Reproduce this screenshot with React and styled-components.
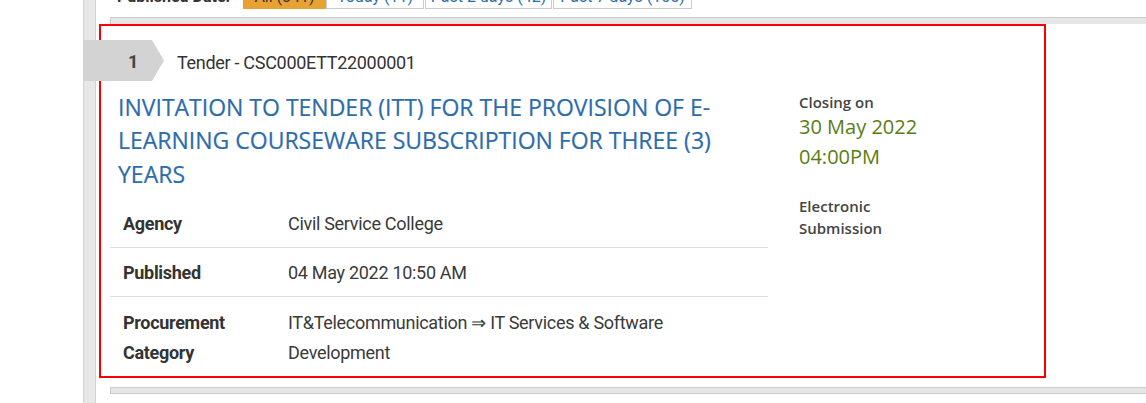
import React from "react";
import styled, { createGlobalStyle } from "styled-components";

const Global = createGlobalStyle`
  html, body { margin: 0; padding: 0; background: #fff; }
  body { font-family: Roboto, "Liberation Sans", sans-serif; color: #333; }
`;

const Page = styled.div`
  display: flex;
  height: 403px;
  overflow: hidden;
`;

const Gutter = styled.div`
  width: 83px;
  flex-shrink: 0;
`;

const Rail = styled.div`
  width: 13px;
  flex-shrink: 0;
  box-sizing: border-box;
  background: #e7e7e7;
  border-left: 1px solid #d3d3d3;
  border-right: 1px solid #d3d3d3;
`;

const Main = styled.div`
  flex: 1;
  display: flex;
  flex-direction: column;
  min-width: 0;
`;

const FilterBar = styled.div`
  display: flex;
  align-items: stretch;
  height: 26px;
  margin-top: -17px;
  margin-left: 21px;
`;

const FilterLabel = styled.span`
  display: flex;
  align-items: center;
  font-weight: 700;
  font-size: 16px;
  color: #333;
  width: 126px;
`;

const Tab = styled.span`
  display: flex;
  align-items: center;
  justify-content: center;
  box-sizing: border-box;
  width: ${(p) => p.$w}px;
  font-size: 16px;
  background: ${(p) => (p.$active ? "#e8a234" : "#fff")};
  color: ${(p) => (p.$active ? "#333" : "#2e6da4")};
  border: 1px solid ${(p) => (p.$active ? "#e8a234" : "#ccc")};
  margin-left: ${(p) => (p.$gap ? 1 : 0)}px;
`;

const Divider = styled.div`
  margin-left: 14px;
  margin-top: ${(p) => p.$top}px;
  height: 7px;
  box-sizing: border-box;
  background: #e6e6e6;
  border: 1px solid #cbcbcb;
  border-right: none;
  ${(p) => (p.$open ? "border-bottom: none;" : "")}
`;

const Card = styled.div`
  position: relative;
  margin-left: 3px;
  width: 947px;
  height: 354px;
  box-sizing: border-box;
  border: 2px solid #ff0000;
  padding-top: 14px;
`;

const Header = styled.div`
  display: flex;
  align-items: center;
  margin-left: -18px;
  height: 41px;
`;

const Ribbon = styled.div`
  width: 81px;
  height: 41px;
  background: #d3d3d3;
  clip-path: polygon(0 0, 69px 0, 81px 50%, 69px 100%, 0 100%);
  display: flex;
  align-items: center;
  padding: 2px 0 0 45px;
  box-sizing: border-box;
  font-weight: 700;
  font-size: 18px;
  color: #444;
`;

const RefNo = styled.span`
  margin-left: 13px;
  padding-top: 3px;
  font-size: 18px;
  letter-spacing: -0.3px;
  color: #333;
`;

const Body = styled.div`
  display: flex;
  padding-left: 9px;
  margin-top: 9.5px;
`;

const LeftCol = styled.div`
  width: 658px;
  flex-shrink: 0;
`;

const Title = styled.h2`
  margin: 0;
  padding: 0 0 0 8px;
  font-family: "Open Sans", "Liberation Sans", sans-serif;
  font-weight: 400;
  font-size: 23px;
  line-height: 33.5px;
  color: #2c6cab;
  -webkit-text-stroke: 0.2px #2c6cab;
`;

const Table = styled.div`
  margin-top: 7px;
`;

const Row = styled.div`
  display: flex;
  padding: 10.5px 13px 8px;
  line-height: 30px;
  font-size: 18px;
  letter-spacing: -0.3px;
  border-bottom: ${(p) => (p.$last ? "none" : "1px solid #dcdcdc")};
`;

const Label = styled.div`
  width: 165px;
  flex-shrink: 0;
  font-weight: 700;
  color: #333;
`;

const Value = styled.div`
  flex: 1;
  color: #3a3a3a;
`;

const RightCol = styled.div`
  margin-left: 31px;
  padding-top: 1.5px;
  font-family: "Open Sans", "Liberation Sans", sans-serif;
`;

const Small = styled.div`
  font-size: 15px;
  font-weight: 600;
  color: #444;
  line-height: ${(p) => p.$lh || 20}px;
  margin-top: ${(p) => p.$mt || 0}px;
`;

const DateText = styled.div`
  font-size: 20px;
  color: #5b7c12;
  line-height: 30px;
`;

export default function App() {
  return (
    <>
      <Global />
      <Page>
        <Gutter />
        <Rail />
        <Main>
          <FilterBar>
            <FilterLabel>Published Date:</FilterLabel>
            <Tab $active $w={83}>All (341)</Tab>
            <Tab $w={98}>Today (11)</Tab>
            <Tab $gap $w={127}>Past 2 days (42)</Tab>
            <Tab $gap $w={139}>Past 7 days (105)</Tab>
          </FilterBar>
          <Divider $top={8} $open />
          <Card>
            <Header>
              <Ribbon>1</Ribbon>
              <RefNo>Tender - CSC000ETT22000001</RefNo>
            </Header>
            <Body>
              <LeftCol>
                <Title>
                  INVITATION TO TENDER (ITT) FOR THE PROVISION OF E-LEARNING
                  COURSEWARE SUBSCRIPTION FOR THREE (3) YEARS
                </Title>
                <Table>
                  <Row>
                    <Label>Agency</Label>
                    <Value>Civil Service College</Value>
                  </Row>
                  <Row>
                    <Label>Published</Label>
                    <Value>04 May 2022 10:50 AM</Value>
                  </Row>
                  <Row $last>
                    <Label>Procurement Category</Label>
                    <Value>IT&amp;Telecommunication ⇒ IT Services &amp; Software Development</Value>
                  </Row>
                </Table>
              </LeftCol>
              <RightCol>
                <Small>Closing on</Small>
                <DateText>30 May 2022</DateText>
                <DateText>04:00PM</DateText>
                <Small $mt={23} $lh={22}>
                  Electronic
                  <br />
                  Submission
                </Small>
              </RightCol>
            </Body>
          </Card>
          <Divider $top={9} />
        </Main>
      </Page>
    </>
  );
}
